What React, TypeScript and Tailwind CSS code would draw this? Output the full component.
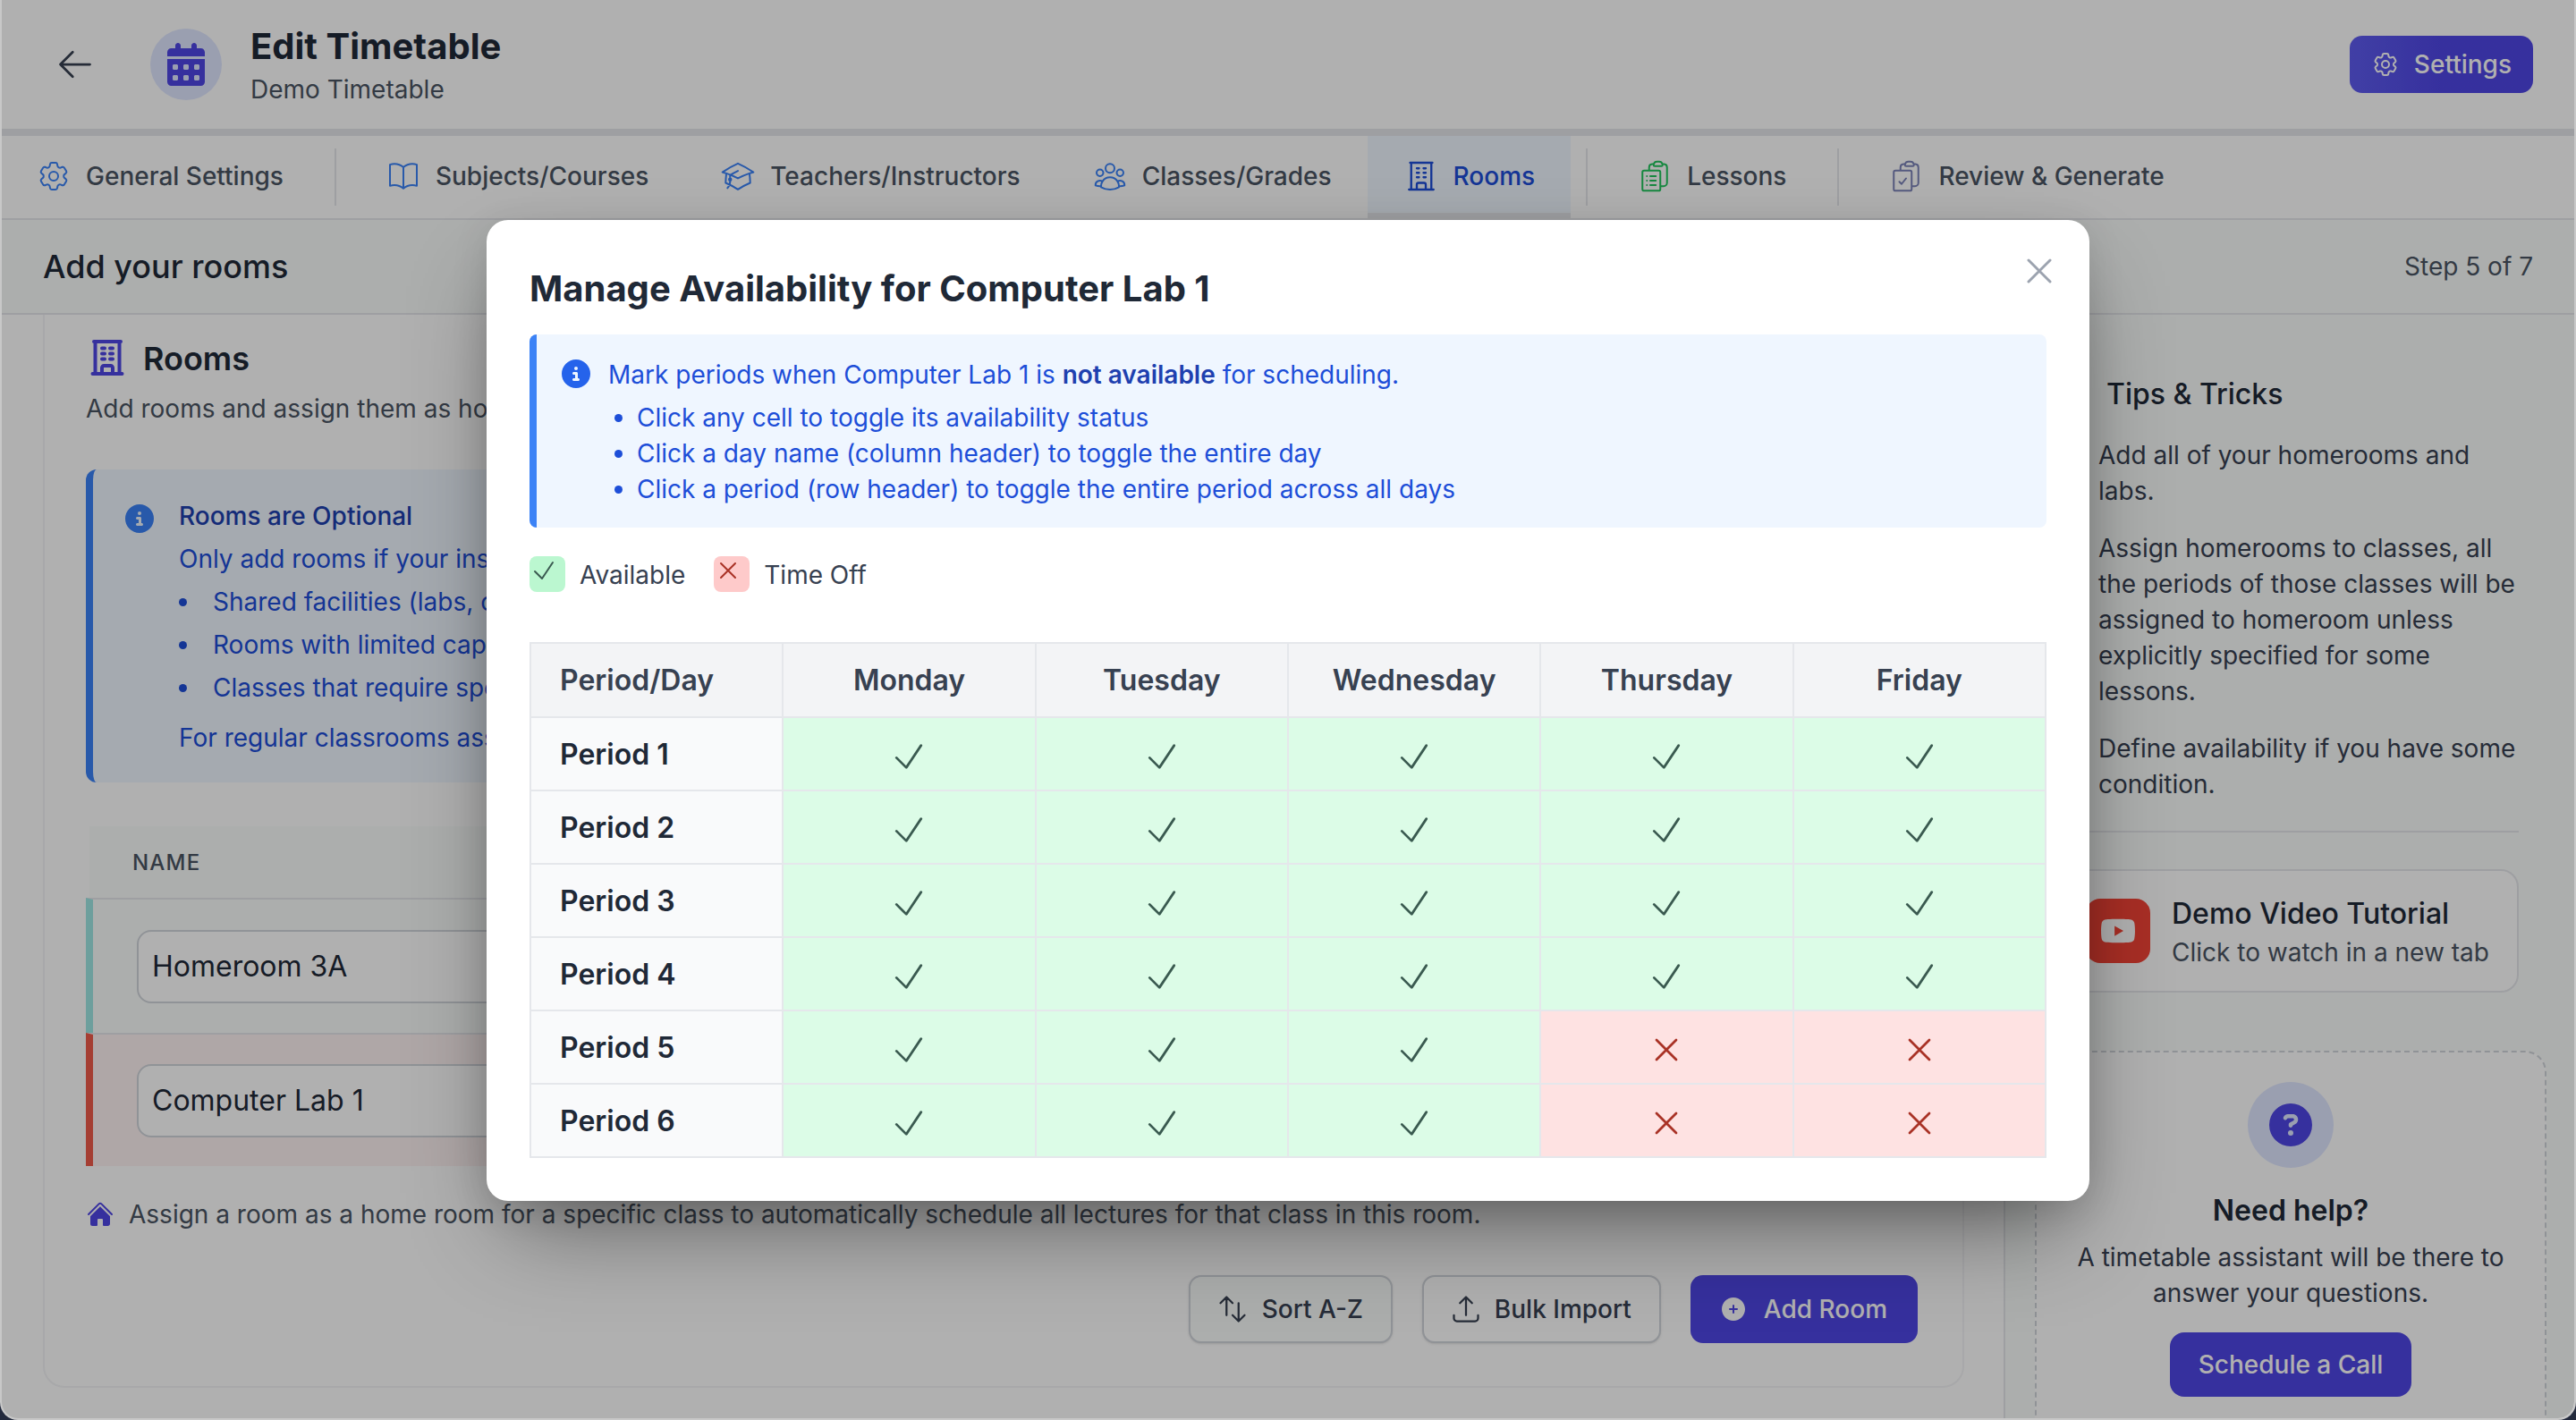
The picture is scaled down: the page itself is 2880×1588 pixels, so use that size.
import React from "react";
import {
  HiOutlineCog6Tooth,
  HiOutlineBookOpen,
  HiOutlineAcademicCap,
  HiOutlineUserGroup,
  HiOutlineBuildingOffice,
  HiOutlineClipboardDocumentList,
  HiOutlineClipboardDocumentCheck,
  HiOutlineArrowLeft,
  HiOutlineArrowsUpDown,
  HiOutlineArrowUpTray,
  HiOutlineCheck,
  HiOutlineXMark,
  HiPlusCircle,
  HiHome,
} from "react-icons/hi2";
import { FaCalendarDays, FaCircleInfo, FaCircleQuestion, FaYoutube } from "react-icons/fa6";

const days = ["Monday", "Tuesday", "Wednesday", "Thursday", "Friday"];
const periods = ["Period 1", "Period 2", "Period 3", "Period 4", "Period 5", "Period 6"];

function Tab({
  icon,
  label,
  active,
  pl,
}: {
  icon: React.ReactNode;
  label: string;
  active?: boolean;
  pl?: string;
}) {
  return (
    <div
      className={
        "flex h-[92px] items-center gap-[16px] border-b-[6px] pr-[40px] pt-[3px] text-[28px] font-medium leading-[40px] whitespace-nowrap " +
        (pl ?? "pl-[40px]") +
        (active ? " border-[#e5e7eb] bg-[#eff6ff] text-[#1d4ed8]" : " border-transparent text-[#4b5563]")
      }
    >
      {icon}
      <span>{label}</span>
    </div>
  );
}

function TabDivider() {
  return <div className="mx-[17px] h-[64px] w-[2px] shrink-0 bg-[#e5e7eb]" />;
}

function Dot() {
  return <span className="h-[9px] w-[9px] shrink-0 rounded-full bg-[#1d4ed8]" />;
}

export default function App() {
  return (
    <div className="h-[1588px] w-full overflow-hidden bg-[#232a3d] [font-family:Inter,sans-serif]">
      <div className="relative flex h-full flex-col overflow-hidden rounded-b-[20px] border-x-2 border-b-2 border-[#c8c8c8] bg-white text-[#1f2937]">
        {/* Header */}
        <header className="flex h-[152px] shrink-0 items-center justify-between border-b-8 border-[#e5e7eb] pl-[60px] pr-[46px]">
          <div className="flex items-center">
            <HiOutlineArrowLeft className="text-[#374151]" size={44} />
            <div className="ml-[62px] flex h-[80px] w-[80px] items-center justify-center rounded-full bg-[#e0e7ff] text-[#4f46e5]">
              <FaCalendarDays size={48} />
            </div>
            <div className="ml-[32px] flex flex-col">
              <div className="text-[40px] font-bold leading-[56px]">Edit Timetable</div>
              <div className="text-[28px] leading-[40px] text-[#4b5563]">Demo Timetable</div>
            </div>
          </div>
          <button className="flex h-[64px] items-center gap-[16px] rounded-[14px] bg-linear-to-r from-[#5f5cf0] via-[#4f46e5] to-[#4f46e5] px-[24px] text-[28px] font-medium text-white">
            <HiOutlineCog6Tooth size={32} />
            Settings
          </button>
        </header>

        {/* Tabs */}
        <nav className="flex h-[94px] shrink-0 border-b-2 border-[#e5e7eb]">
          <div className="flex h-[92px] items-center">
            <Tab pl="pl-[38px]" label="General Settings" icon={<HiOutlineCog6Tooth size={40} strokeWidth={1.2} className="text-[#3b82f6]" />} />
            <TabDivider />
            <Tab pl="pl-[38px]" label="Subjects/Courses" icon={<HiOutlineBookOpen size={40} strokeWidth={1.2} className="text-[#3b82f6]" />} />
            <Tab label="Teachers/Instructors" icon={<HiOutlineAcademicCap size={40} strokeWidth={1.2} className="text-[#3b82f6]" />} />
            <Tab label="Classes/Grades" icon={<HiOutlineUserGroup size={40} strokeWidth={1.2} className="text-[#3b82f6]" />} />
            <Tab active label="Rooms" icon={<HiOutlineBuildingOffice size={40} strokeWidth={1.4} className="text-[#1d4ed8]" />} />
            <TabDivider />
            <Tab pl="pl-[38px]" label="Lessons" icon={<HiOutlineClipboardDocumentList size={40} strokeWidth={1.2} className="text-[#22c55e]" />} />
            <TabDivider />
            <Tab pl="pl-[38px]" label="Review & Generate" icon={<HiOutlineClipboardDocumentCheck size={40} strokeWidth={1.2} className="text-[#7c83b8]" />} />
          </div>
        </nav>

        {/* Step title */}
        <div className="flex h-[106px] shrink-0 items-center justify-between border-b-2 border-[#e5e7eb] bg-[#fafcfb] pl-[46px] pr-[46px]">
          <h2 className="text-[36px] font-medium text-[#1f2937]">Add your rooms</h2>
          <span className="text-[28px] text-[#4b5563]">Step 5 of 7</span>
        </div>

        {/* Body */}
        <div className="flex min-h-0 flex-1">
          <main className="min-w-0 flex-1 overflow-hidden pl-[46px] pr-[44px]">
            <div className="-mt-[24px] flex flex-col rounded-[24px] border-2 border-[#f3f4f6] pl-[46px] pr-[48px] pt-[46px]">
              <div className="flex h-[48px] items-center gap-[16px]">
                <HiOutlineBuildingOffice size={48} strokeWidth={2} className="text-[#4f46e5]" />
                <h3 className="pt-[1px] text-[36px] font-semibold leading-[48px]">Rooms</h3>
              </div>
              <p className="mt-[13px] whitespace-nowrap text-[28px] leading-[40px] text-[#4b5563]">
                Add rooms and assign them as homerooms or specialised spaces for your timetable.
              </p>

              <div className="mt-[48px] flex h-[350px] rounded-[12px] border-l-8 border-[#3b82f6] bg-[#eff6ff] pl-[36px] pt-[32px] text-[#1d4ed8]">
                <FaCircleInfo size={32} className="mt-[7px] shrink-0 text-[#3b82f6]" />
                <div className="ml-[28px] flex flex-col text-[28px] leading-[40px] whitespace-nowrap">
                  <div className="font-medium text-[#1e40af]">Rooms are Optional</div>
                  <div className="mt-[8px]">Only add rooms if your institution has specific constraints such as:</div>
                  <div className="mt-[8px] flex flex-col gap-[8px]">
                    {[
                      "Shared facilities (labs, computer rooms, gyms)",
                      "Rooms with limited capacity or availability",
                      "Classes that require specialised equipment",
                    ].map((t) => (
                      <div key={t} className="flex items-center">
                        <Dot />
                        <span className="ml-[29px]">{t}</span>
                      </div>
                    ))}
                  </div>
                  <div className="mt-[16px]">For regular classrooms assigned to one class, you can skip this step.</div>
                </div>
              </div>

              <div className="ml-[4px] mt-[49px] flex h-[80px] items-center bg-[#fafcfb] pl-[48px] pt-[2px] text-[24px] font-medium tracking-[1.2px] text-[#4b5563]">
                NAME
              </div>
              <div className="flex h-[151px] items-center border-l-8 border-t-2 border-l-[#9fe6e4] border-t-[#e5e7eb] bg-[#fafcfb] pl-[49px]">
                <div className="flex h-[82px] w-[900px] items-center rounded-[16px] border-2 border-[#d1d5db] bg-white pl-[15px] text-[32px] text-[#1f2937]">
                  Homeroom 3A
                </div>
              </div>
              <div className="flex h-[149px] items-center border-l-8 border-t-2 border-l-[#f05a4a] border-t-[#e5e7eb] bg-[#fef2f2] pl-[49px]">
                <div className="flex h-[82px] w-[900px] items-center rounded-[16px] border-2 border-[#d1d5db] bg-white pl-[15px] text-[32px] text-[#1f2937]">
                  Computer Lab 1
                </div>
              </div>

              <div className="mt-[34px] flex h-[40px] items-center gap-[16px] text-[28px] text-[#4b5563]">
                <HiHome size={32} className="text-[#4f46e5]" />
                <span>Assign a room as a home room for a specific class to automatically schedule all lectures for that class in this room.</span>
              </div>

              <div className="mt-[48px] flex justify-end gap-[33px] pb-[48px] pr-[2px] text-[28px] font-medium">
                <button className="flex h-[76px] items-center gap-[15px] rounded-[14px] border-2 border-[#d1d5db] bg-[#fafcfb] pl-[29px] pr-[31px] text-[#374151] shadow-sm">
                  <HiOutlineArrowsUpDown size={36} />
                  Sort A-Z
                </button>
                <button className="flex h-[76px] items-center gap-[14px] rounded-[14px] border-2 border-[#d1d5db] bg-white pl-[29px] pr-[31px] text-[#374151] shadow-sm">
                  <HiOutlineArrowUpTray size={36} />
                  Bulk Import
                </button>
                <button className="flex h-[76px] items-center gap-[18px] rounded-[14px] bg-[#4f46e5] pl-[32px] pr-[34px] text-white">
                  <HiPlusCircle size={32} />
                  Add Room
                </button>
              </div>
            </div>
          </main>

          {/* Sidebar */}
          <aside className="w-[638px] shrink-0 overflow-hidden border-l-2 border-[#e5e7eb] bg-[#fafcfb] pl-[33px] pr-[31px] pt-[65px]">
            <div className="mx-[31px]">
              <div className="ml-[49px] text-[32px] font-medium leading-[48px] text-[#1f2937]">Tips &amp; Tricks</div>
              <div className="ml-[40px] mt-[24px] flex flex-col gap-[24px] text-[28px] leading-[40px] text-[#374151]">
                <p>Add all of your homerooms and labs.</p>
                <p>Assign homerooms to classes, all the periods of those classes will be assigned to homeroom unless explicitly specified for some lessons.</p>
                <p>Define availability if you have some condition.</p>
              </div>
              <div className="mt-[32px] h-[2px] bg-[#e5e7eb]" />
              <div className="mt-[41px] flex h-[138px] items-center gap-[24px] rounded-[20px] border-2 border-[#e5e7eb] bg-white pl-[24px]">
                <div className="flex h-[72px] w-[72px] items-center justify-center rounded-[16px] bg-[#f44336] text-white">
                  <FaYoutube size={40} />
                </div>
                <div className="flex flex-col whitespace-nowrap pt-[2px]">
                  <div className="text-[32px] font-medium leading-[44px] text-[#1f2937]">Demo Video Tutorial</div>
                  <div className="mt-[1px] text-[28px] leading-[40px] text-[#4b5563]">Click to watch in a new tab</div>
                </div>
              </div>
            </div>
            <div className="mt-[65px] flex h-[440px] flex-col items-center rounded-[24px] border-2 border-dashed border-[#d1d5db] bg-white pt-[33px] text-center">
              <div className="flex h-[96px] w-[96px] items-center justify-center rounded-full bg-[#e0e7ff] text-[#4f46e5]">
                <FaCircleQuestion size={48} />
              </div>
              <div className="mt-[24px] text-[32px] font-semibold leading-[48px] text-[#1f2937]">Need help?</div>
              <p className="mt-[8px] w-[500px] text-[28px] leading-[40px] text-[#374151]">A timetable assistant will be there to answer your questions.</p>
              <button className="mt-[24px] flex h-[72px] items-center rounded-[16px] bg-[#4f46e5] px-[32px] text-[28px] font-medium text-white">
                Schedule a Call
              </button>
            </div>
          </aside>
        </div>

        {/* Overlay + modal */}
        <div className="absolute inset-0 flex items-center justify-center bg-black/[0.31]">
          <div className="relative mt-[3px] flex h-[1097px] w-[1792px] flex-col rounded-[24px] bg-white p-[48px] shadow-[0_50px_100px_-24px_rgba(0,0,0,0.45),0_10px_40px_0_rgba(0,0,0,0.12)]">
            <button className="absolute right-[32px] top-[33px] text-[#9ca3af]">
              <HiOutlineXMark size={48} />
            </button>
            <h2 className="pt-[1px] text-[40px] font-bold leading-[55px] text-[#1f2937]">Manage Availability for Computer Lab 1</h2>

            <div className="mt-[24px] flex h-[216px] rounded-[8px] border-l-8 border-[#3b82f6] bg-[#eff6ff] pl-[28px] pt-[25px] text-[28px] leading-[40px] text-[#1d4ed8]">
              <FaCircleInfo size={32} className="mt-[3px] shrink-0 text-[#2563eb]" />
              <div className="ml-[20px] flex flex-col">
                <div>
                  Mark periods when Computer Lab 1 is <strong className="font-semibold text-[#1e40af]">not available</strong> for scheduling.
                </div>
                <div className="mt-[8px] flex flex-col">
                  {[
                    "Click any cell to toggle its availability status",
                    "Click a day name (column header) to toggle the entire day",
                    "Click a period (row header) to toggle the entire period across all days",
                  ].map((t) => (
                    <div key={t} className="flex items-center pl-[7px]">
                      <Dot />
                      <span className="ml-[16px]">{t}</span>
                    </div>
                  ))}
                </div>
              </div>
            </div>

            <div className="mt-[32px] flex h-[40px] items-center text-[28px] text-[#374151]">
              <span className="flex h-[40px] w-[40px] items-center justify-center rounded-[8px] bg-[#bbf7d0] pb-[8px] pr-[8px] text-[#3a5a50]">
                <HiOutlineCheck size={36} />
              </span>
              <span className="ml-[16px] pt-[1px]">Available</span>
              <span className="ml-[32px] flex h-[40px] w-[40px] items-center justify-center rounded-[8px] bg-[#fecaca] pb-[8px] pr-[8px] text-[#a93226]">
                <HiOutlineXMark size={36} />
              </span>
              <span className="ml-[16px] pt-[1px]">Time Off</span>
            </div>

            <table className="mt-[56px] w-full table-fixed border-collapse border-2 border-[#e5e7eb]">
              <thead>
                <tr className="bg-[#f3f4f6] text-[32px] font-semibold text-[#374151]">
                  <th className="h-[83px] border-2 border-[#e5e7eb] pl-[32px] pt-[1px] text-left font-semibold">Period/Day</th>
                  {days.map((d) => (
                    <th key={d} className="h-[83px] border-2 border-[#e5e7eb] pt-[1px] text-center font-semibold">
                      {d}
                    </th>
                  ))}
                </tr>
              </thead>
              <tbody>
                {periods.map((p, r) => (
                  <tr key={p}>
                    <td className="h-[82px] border-2 border-[#e5e7eb] bg-[#f9fafb] pl-[32px] pt-[2px] text-[32px] font-semibold text-[#1f2937]">{p}</td>
                    {days.map((d, c) => {
                      const off = r >= 4 && c >= 3;
                      return (
                        <td key={d} className={"h-[82px] border-2 border-[#e5e7eb] pt-[5px] " + (off ? "bg-[#fee2e2]" : "bg-[#dcfce7]")}>
                          <div className={"flex justify-center " + (off ? "text-[#a93226]" : "text-[#3a5a50]")}>
                            {off ? <HiOutlineXMark size={44} /> : <HiOutlineCheck size={44} />}
                          </div>
                        </td>
                      );
                    })}
                  </tr>
                ))}
              </tbody>
            </table>
          </div>
        </div>
      </div>
    </div>
  );
}
